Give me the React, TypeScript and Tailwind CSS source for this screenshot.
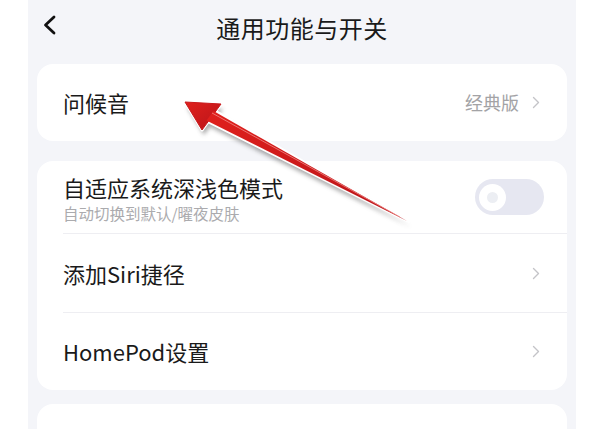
import React from "react";

const font = { fontFamily: '"Noto Sans CJK SC", "Noto Sans", sans-serif' };

function Chevron({ className = "" }: { className?: string }) {
  return (
    <svg width="8" height="13" viewBox="0 0 8 13" className={className}>
      <polyline points="1.5,1.5 6.5,6.5 1.5,11.5" fill="none" stroke="#c4c4c8" strokeWidth="1.4" strokeLinecap="round" strokeLinejoin="round" />
    </svg>
  );
}

function Arrow() {
  return (
    <svg className="absolute inset-0 pointer-events-none" width="598" height="429" viewBox="0 0 598 429">
      <defs>
        <filter id="blur" x="-20%" y="-20%" width="140%" height="140%">
          <feGaussianBlur stdDeviation="2.2" />
        </filter>
        <linearGradient id="red" x1="0" y1="0" x2="1" y2="1">
          <stop offset="0" stopColor="#e0201c" />
          <stop offset="1" stopColor="#b8141a" />
        </linearGradient>
      </defs>
      {/* shadow */}
      <g filter="url(#blur)" opacity="0.5" transform="translate(2 5)">
        <polygon points="185,102 221,104 202,130" fill="#555" />
        <polygon points="206,121 214,110 409,222" fill="#555" />
      </g>
      {/* white halo */}
      <polygon points="185,102 221,104 202,130" fill="#fff" stroke="#fff" strokeWidth="3" strokeLinejoin="round" />
      <polygon points="206,121 214,110 409,222" fill="#fff" stroke="#fff" strokeWidth="2.5" strokeLinejoin="round" />
      {/* red arrow */}
      <polygon points="185,102 221,104 202,130" fill="url(#red)" stroke="#c9181b" strokeWidth="1" strokeLinejoin="round" />
      <polygon points="206.5,120.5 213.5,111 407,221" fill="url(#red)" />
      <line x1="212" y1="113" x2="400" y2="217" stroke="#f08a86" strokeWidth="0.8" />
    </svg>
  );
}

export default function App() {
  return (
    <div className="relative w-[598px] h-[429px] bg-white overflow-hidden" style={font}>
      <div className="ml-[28px] w-[548px] h-full bg-[#f4f5f9] flex flex-col overflow-hidden">
        {/* Header */}
        <div className="relative shrink-0 h-[64px] flex items-start justify-center">
          <svg width="15" height="20" viewBox="0 0 15 20" className="absolute left-[14px] top-[15px]">
            <polyline points="12,2 3.5,10 12,18" fill="none" stroke="#111" strokeWidth="2.8" strokeLinecap="round" strokeLinejoin="round" />
          </svg>
          <h1 className="mt-[12px] text-[24px] leading-[32px] text-[#1a1a1a] tracking-[0.5px]">通用功能与开关</h1>
        </div>

        {/* Card 1 */}
        <div className="shrink-0 mx-[9px] h-[77px] bg-white rounded-[16px] pl-[26px] pr-[27px] flex items-center justify-between">
          <span className="text-[22px] text-[#1a1a1a]">问候音</span>
          <div className="flex items-center gap-[13px]">
            <span className="text-[18px] text-[#a3a3a6]">经典版</span>
            <Chevron />
          </div>
        </div>

        {/* Card 2 */}
        <div className="shrink-0 mx-[9px] mt-[20px] bg-white rounded-[16px] flex flex-col">
          <div className="h-[72px] pl-[26px] pr-[23px] flex items-center justify-between">
            <div className="flex flex-col pt-[2px]">
              <span className="text-[22px] leading-[30px] text-[#1a1a1a]">自适应系统深浅色模式</span>
              <span className="text-[15.5px] leading-[22px] text-[#ababae]">自动切换到默认/曜夜皮肤</span>
            </div>
            <div className="w-[69px] h-[36px] rounded-full bg-[#e6e7f1] flex items-center pl-[4px]">
              <div className="w-[27px] h-[27px] rounded-full bg-white flex items-center justify-center">
                <div className="w-[11px] h-[11px] rounded-full bg-[#eceef3]" />
              </div>
            </div>
          </div>
          <div className="ml-[26px] h-px bg-[#eeeef2]" />
          <div className="h-[78px] pl-[26px] pr-[27px] flex items-center justify-between">
            <span className="text-[22px] text-[#1a1a1a]">添加Siri捷径</span>
            <Chevron />
          </div>
          <div className="ml-[26px] h-px bg-[#eeeef2]" />
          <div className="h-[77px] pl-[26px] pr-[27px] flex items-center justify-between">
            <span className="text-[22px] text-[#1a1a1a]">HomePod设置</span>
            <Chevron />
          </div>
        </div>

        {/* Card 3 (cut off) */}
        <div className="shrink-0 mx-[9px] mt-[14px] h-[80px] bg-white rounded-[16px]" />
      </div>
      <Arrow />
    </div>
  );
}
